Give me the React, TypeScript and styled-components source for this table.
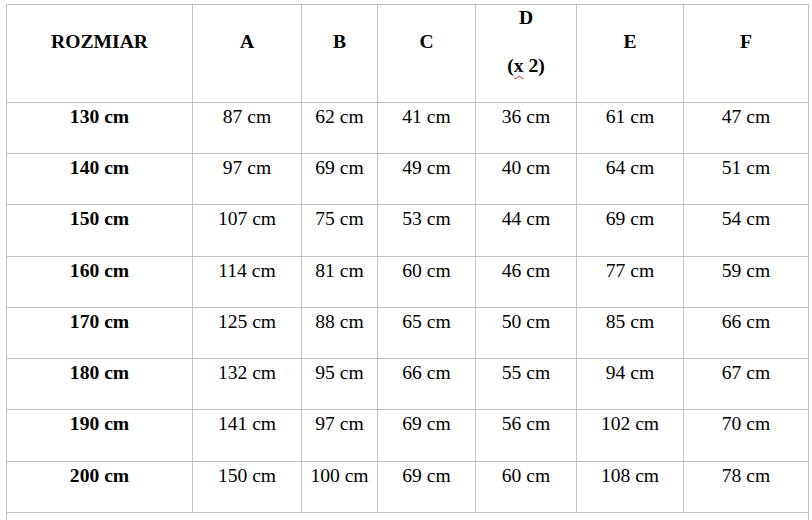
import React from "react";
import styled, { createGlobalStyle } from "styled-components";

const Global = createGlobalStyle`
  html, body { margin: 0; padding: 0; background: #ffffff; }
  body { font-family: "Liberation Serif", "Times New Roman", serif; color: #000; }
`;

const Page = styled.div`
  padding: 4px 0 0 6px;
`;

const Grid = styled.div`
  display: grid;
  width: max-content;
  grid-template-columns: 185px 108px 75px 97px 100px 106px 124px;
  grid-template-rows: 97px 50px 50px 51px 50px 50px 50px 51px 50px 30px;
  gap: 1px;
  padding: 1px;
  background: #c0c0c0;
  font-size: 19.6px;
  line-height: 22px;
`;

const HeadCell = styled.div`
  background: #fff;
  display: flex;
  flex-direction: column;
  align-items: center;
  justify-content: center;
  gap: 26px;
  padding-bottom: 23px;
  box-sizing: border-box;
  font-weight: bold;
`;

const Cell = styled.div<{ $bold?: boolean }>`
  background: #fff;
  padding-top: 3px;
  text-align: center;
  font-weight: ${(p) => (p.$bold ? "bold" : "normal")};
  white-space: nowrap;
`;

const NoteCell = styled.div`
  background: #fff;
  grid-column: 1 / -1;
`;

const Squiggle = styled.span`
  text-decoration: underline wavy #d02020;
  text-decoration-thickness: 1px;
  text-underline-offset: 3px;
`;

const headers = ["A", "B", "C", "D", "E", "F"];

const rows: string[][] = [
  ["130 cm", "87 cm", "62 cm", "41 cm", "36 cm", "61 cm", "47 cm"],
  ["140 cm", "97 cm", "69 cm", "49 cm", "40 cm", "64 cm", "51 cm"],
  ["150 cm", "107 cm", "75 cm", "53 cm", "44 cm", "69 cm", "54 cm"],
  ["160 cm", "114 cm", "81 cm", "60 cm", "46 cm", "77 cm", "59 cm"],
  ["170 cm", "125 cm", "88 cm", "65 cm", "50 cm", "85 cm", "66 cm"],
  ["180 cm", "132 cm", "95 cm", "66 cm", "55 cm", "94 cm", "67 cm"],
  ["190 cm", "141 cm", "97 cm", "69 cm", "56 cm", "102 cm", "70 cm"],
  ["200 cm", "150 cm", "100 cm", "69 cm", "60 cm", "108 cm", "78 cm"],
];

export default function App() {
  return (
    <Page>
      <Global />
      <Grid>
        <HeadCell>
          <span>ROZMIAR</span>
        </HeadCell>
        {headers.map((h) =>
          h === "D" ? (
            <HeadCell key={h}>
              <span>D</span>
              <span>
                (<Squiggle>x</Squiggle> 2)
              </span>
            </HeadCell>
          ) : (
            <HeadCell key={h}>
              <span>{h}</span>
            </HeadCell>
          )
        )}
        {rows.map((r) =>
          r.map((v, i) => (
            <Cell key={r[0] + i} $bold={i === 0}>
              {v}
            </Cell>
          ))
        )}
        <NoteCell />
      </Grid>
    </Page>
  );
}
